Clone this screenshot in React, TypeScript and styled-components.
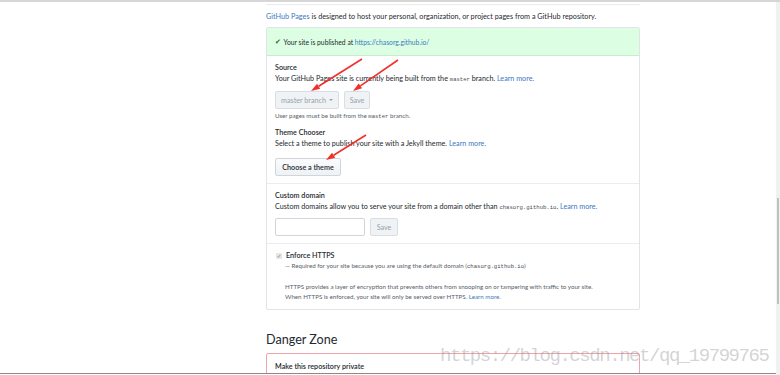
import React from "react";
import styled, { createGlobalStyle } from "styled-components";

const GlobalStyle = createGlobalStyle`
  html, body { margin: 0; padding: 0; background: #fff; }
  body { font-family: "Segoe UI", "Lato", "Noto Sans", sans-serif; color: #24292e; }
  * { box-sizing: border-box; }
`;

const Page = styled.div`
  position: relative;
  width: 780px;
  height: 375px;
  overflow: hidden;
  display: flex;
  border-top: 2px solid #d6d6d6;
`;

const Main = styled.div`
  flex: 1;
  display: flex;
  flex-direction: column;
  padding-left: 266px;
`;

const Column = styled.div`
  width: 374px;
  display: flex;
  flex-direction: column;
`;

const PrevBoxEdge = styled.div`
  height: 3px;
  border-bottom: 1px solid #ebebeb;
`;

const Intro = styled.p`
  margin: 6px 0 0;
  font-size: 7.25px;
  line-height: 12px;
  color: #24292e;
  white-space: nowrap;
`;

const Link = styled.a`
  color: #4078c0;
  text-decoration: none;
`;

const Box = styled.div`
  margin-top: 4px;
  border: 1px solid #e1e4e8;
  border-radius: 2px;
  display: flex;
  flex-direction: column;
`;

const Flash = styled.div`
  background: #dcffe4;
  border-bottom: 1px solid #c8ecd0;
  height: 28px;
  padding: 0 8px;
  display: flex;
  align-items: center;
  font-size: 6.75px;
  color: #24292e;
`;

const Check = styled.span`
  color: #2b6a36;
  font-size: 7px;
  margin-right: 1px;
`;

const Section = styled.div<{ $last?: boolean; $pb?: number }>`
  padding: 7px 8px ${(p) => p.$pb ?? 7}px;
  border-bottom: ${(p) => (p.$last ? "none" : "1px solid #eaecef")};
  display: flex;
  flex-direction: column;
`;

const Title = styled.div<{ $gap?: number }>`
  font-size: 7.2px;
  font-weight: 600;
  line-height: 10px;
  margin-top: ${(p) => p.$gap ?? 0}px;
  color: #24292e;
`;

const Desc = styled.div`
  font-size: 7.2px;
  line-height: 12px;
  color: #24292e;
  white-space: nowrap;
`;

const Code = styled.code`
  font-family: "Liberation Mono", "DejaVu Sans Mono", monospace;
  font-size: 5.6px;
  color: #444d56;
`;

const Row = styled.div<{ $mt?: number }>`
  display: flex;
  gap: 5px;
  margin-top: ${(p) => p.$mt ?? 5}px;
  align-items: center;
`;

const Button = styled.button<{ $disabled?: boolean; $w: number; $h?: number }>`
  width: ${(p) => p.$w}px;
  height: ${(p) => p.$h ?? 18}px;
  padding: 0;
  border: 1px solid ${(p) => (p.$disabled ? "#dadee2" : "#d1d5da")};
  border-radius: 2px;
  background: ${(p) =>
    p.$disabled ? "#eff3f6" : "linear-gradient(#fafbfc, #eff3f6 90%)"};
  color: ${(p) => (p.$disabled ? "#9ba1a7" : "#24292e")};
  font-family: inherit;
  font-size: 7.2px;
  font-weight: ${(p) => (p.$disabled ? 400 : 600)};
  display: flex;
  align-items: center;
  justify-content: center;
  gap: 3px;
`;

const Caret = styled.span`
  display: inline-block;
  width: 0;
  height: 0;
  border-left: 2px solid transparent;
  border-right: 2px solid transparent;
  border-top: 2.5px solid #9ba1a7;
`;

const Note = styled.div`
  font-size: 6.2px;
  line-height: 9px;
  margin-top: 2px;
  color: #586069;
`;

const Input = styled.div`
  width: 90px;
  height: 18px;
  border: 1px solid #d1d5da;
  border-radius: 2px;
  background: #fff;
`;

const CheckRow = styled.div`
  display: flex;
  align-items: center;
  gap: 4px;
`;

const CheckBox = styled.span`
  width: 6px;
  height: 6px;
  margin-left: 1px;
  border-radius: 1px;
  background: #e6e6e6;
  color: #9a9a9a;
  font-size: 5px;
  line-height: 6px;
  text-align: center;
`;

const Indented = styled.div`
  padding-left: 10px;
  display: flex;
  flex-direction: column;
`;

const Small = styled.div<{ $mt?: number }>`
  font-size: 6.2px;
  line-height: 10px;
  color: #586069;
  margin-top: ${(p) => p.$mt ?? 0}px;
  white-space: nowrap;
`;

const DangerTitle = styled.h2`
  margin: 21px 0 0;
  font-size: 12.6px;
  font-weight: 400;
  line-height: 18px;
  color: #24292e;
`;

const DangerBox = styled.div`
  margin-top: 4px;
  border: 1px solid #eea4aa;
  border-radius: 2px;
  height: 60px;
  padding: 8px 8px;
  display: flex;
  flex-direction: column;
`;

const Bottom = styled.div`
  position: absolute;
  left: 0;
  right: 4px;
  top: 371px;
  height: 4px;
  background: #fff;
  border-top: 1px solid #8a8a8a;
`;

const Scroll = styled.div`
  width: 4px;
  background: #f1f1f1;
  display: flex;
  flex-direction: column;
  padding-top: 196px;
  align-items: flex-end;
`;

const Thumb = styled.div`
  width: 2px;
  height: 106px;
  background: #c1c1c1;
  margin-right: 1px;
`;

const Overlay = styled.svg`
  position: absolute;
  left: 0;
  top: 0;
  pointer-events: none;
`;

const Watermark = styled.div`
  position: absolute;
  left: 440px;
  top: 343px;
  font-family: "Liberation Mono", "DejaVu Sans Mono", monospace;
  font-size: 19px;
  letter-spacing: -1.45px;
  color: rgba(150, 150, 150, 0.42);
  white-space: nowrap;
`;

function Arrow({ x1, y1, x2, y2 }: { x1: number; y1: number; x2: number; y2: number }) {
  const ang = Math.atan2(y2 - y1, x2 - x1);
  const len = 9;
  const w = 3;
  const bx = x2 - len * Math.cos(ang);
  const by = y2 - len * Math.sin(ang);
  const px = -Math.sin(ang) * w;
  const py = Math.cos(ang) * w;
  return (
    <g>
      <line x1={x1} y1={y1} x2={bx} y2={by} stroke="#f0302a" strokeWidth={1.6} />
      <polygon
        points={`${x2},${y2} ${bx + px},${by + py} ${bx - px},${by - py}`}
        fill="#f0302a"
      />
    </g>
  );
}

export default function App() {
  return (
    <>
      <GlobalStyle />
      <Page>
        <Main>
          <Column>
            <PrevBoxEdge />
            <Intro>
              <Link>GitHub Pages</Link> is designed to host your personal, organization, or project
              pages from a GitHub repository.
            </Intro>
            <Box>
              <Flash>
                <Check>✔</Check>&nbsp;Your site is published at&nbsp;
                <Link>https://chasorg.github.io/</Link>
              </Flash>
              <Section>
                <Title>Source</Title>
                <Desc>
                  Your GitHub Pages site is currently being built from the <Code>master</Code>{" "}
                  branch. <Link>Learn more.</Link>
                </Desc>
                <Row>
                  <Button $disabled $w={64}>
                    master branch <Caret />
                  </Button>
                  <Button $disabled $w={26}>
                    Save
                  </Button>
                </Row>
                <Note>
                  User pages must be built from the <Code>master</Code> branch.
                </Note>
                <Title $gap={7}>Theme Chooser</Title>
                <Desc>
                  Select a theme to publish your site with a Jekyll theme. <Link>Learn more.</Link>
                </Desc>
                <Row $mt={8}>
                  <Button $w={66}>Choose a theme</Button>
                </Row>
              </Section>
              <Section>
                <Title>Custom domain</Title>
                <Desc>
                  Custom domains allow you to serve your site from a domain other than{" "}
                  <Code>chasorg.github.io</Code>. <Link>Learn more.</Link>
                </Desc>
                <Row $mt={4}>
                  <Input />
                  <Button $disabled $w={28}>
                    Save
                  </Button>
                </Row>
              </Section>
              <Section $last>
                <CheckRow>
                  <CheckBox>✔</CheckBox>
                  <Title>Enforce HTTPS</Title>
                </CheckRow>
                <Indented>
                  <Small>
                    — Required for your site because you are using the default domain (
                    <Code>chasorg.github.io</Code>)
                  </Small>
                  <Small $mt={10}>
                    HTTPS provides a layer of encryption that prevents others from snooping on or
                    tampering with traffic to your site.
                  </Small>
                  <Small>
                    When HTTPS is enforced, your site will only be served over HTTPS.{" "}
                    <Link>Learn more.</Link>
                  </Small>
                </Indented>
              </Section>
            </Box>
            <DangerTitle>Danger Zone</DangerTitle>
            <DangerBox>
              <Title>Make this repository private</Title>
              <Desc>Please upgrade your plan to make this repository private.</Desc>
            </DangerBox>
          </Column>
        </Main>
        <Scroll>
          <Thumb />
        </Scroll>
        <Bottom />
        <Overlay width={780} height={375}>
          <Arrow x1={362} y1={57} x2={311} y2={89} />
          <Arrow x1={398} y1={58} x2={353} y2={89} />
          <Arrow x1={366} y1={133} x2={326} y2={158} />
        </Overlay>
        <Watermark>https://blog.csdn.net/qq_19799765</Watermark>
      </Page>
    </>
  );
}
